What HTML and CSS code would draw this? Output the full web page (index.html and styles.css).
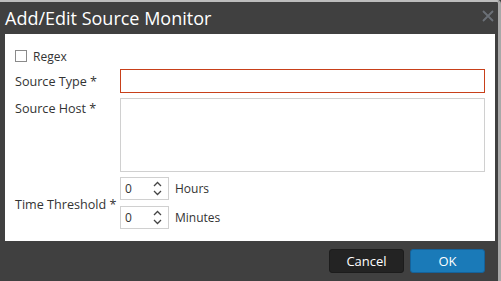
FILE: index.html
```html
<!DOCTYPE html>
<html>
<head>
<meta charset="utf-8">
<link rel="stylesheet" href="styles.css">
</head>
<body>
<div class="window">
  <div class="titlebar">
    <span class="title">Add/Edit Source Monitor</span>
    <svg class="close" width="12" height="12" viewBox="0 0 12 12"><path d="M1 1 L11 11 M11 1 L1 11" stroke="#6b7077" stroke-width="1.8" fill="none"/></svg>
  </div>
  <div class="content">
    <div class="row-check">
      <span class="checkbox"></span>
      <span class="text">Regex</span>
    </div>
    <div class="row row-center">
      <span class="label">Source Type *</span>
      <div class="input error"></div>
    </div>
    <div class="row row-top">
      <span class="label label-top">Source Host *</span>
      <div class="textarea"></div>
    </div>
    <div class="row row-center">
      <span class="label label-time">Time Threshold *</span>
      <div class="times">
        <div class="time">
          <div class="number"><span class="val">0</span>
            <svg class="spin" width="9" height="15" viewBox="0 0 9 15"><path d="M1 5 L4.5 1.5 L8 5 M1 10 L4.5 13.5 L8 10" stroke="#444" stroke-width="1.3" fill="none"/></svg>
          </div>
          <span class="text">Hours</span>
        </div>
        <div class="time">
          <div class="number"><span class="val">0</span>
            <svg class="spin" width="9" height="15" viewBox="0 0 9 15"><path d="M1 5 L4.5 1.5 L8 5 M1 10 L4.5 13.5 L8 10" stroke="#444" stroke-width="1.3" fill="none"/></svg>
          </div>
          <span class="text">Minutes</span>
        </div>
      </div>
    </div>
  </div>
  <div class="footer">
    <button class="btn cancel">Cancel</button>
    <button class="btn ok">OK</button>
  </div>
</div>
</body>
</html>
```
FILE: styles.css
```css
* { box-sizing: border-box; }
html, body { margin: 0; padding: 0; background: #404040; }
body { font-family: "Open Sans", "DejaVu Sans", sans-serif; }
.window {
  width: 501px;
  height: 281px;
  background: #404040;
  border-top: 2px solid #bdbdbd;
  border-right: 3px solid #a8a8a8;
  border-top-right-radius: 4px;
  display: flex;
  flex-direction: column;
}
.titlebar {
  height: 32px;
  display: flex;
  align-items: center;
  justify-content: space-between;
  padding: 0 4px 0 5px;
}
.title {
  color: #ffffff;
  font-size: 18px;
  line-height: 32px;
}
.close { margin-top: -4px; }
.content {
  background: #fff;
  margin: 0 3px 0 5px;
  height: 207px;
  padding: 16px 10px 0 10px;
  display: flex;
  flex-direction: column;
  color: #333;
  font-size: 12px;
}
.row-check {
  display: flex;
  align-items: center;
  height: 12px;
  margin-bottom: 7px;
}
.checkbox {
  width: 12px;
  height: 12px;
  border: 1px solid #8a8a8a;
  margin-right: 6px;
}
.row { display: flex; margin-bottom: 5px; }
.row-center { align-items: center; }
.row-top { align-items: flex-start; }
.label { width: 105px; flex: none; font-size: 12.6px; }
.label-top { line-height: 24px; margin-top: -1px; }
.label-time { padding-top: 3px; }
.input {
  flex: 1;
  height: 24px;
  border: 1px solid #ccc;
}
.input.error { border-color: #c8401a; }
.textarea {
  flex: 1;
  height: 74px;
  border: 1px solid #d0d0d0;
}
.times { display: flex; flex-direction: column; gap: 6px; }
.time { display: flex; align-items: center; }
.number {
  width: 49px;
  height: 23px;
  border: 1px solid #d0d0d0;
  display: flex;
  align-items: center;
  justify-content: space-between;
  padding: 0 6px 0 4px;
  margin-right: 6px;
}
.val { color: #333; }
.footer {
  flex: 1;
  display: flex;
  justify-content: flex-end;
  align-items: flex-start;
  gap: 6px;
  padding: 8px 13px 0 0;
}
.btn {
  width: 75px;
  height: 24px;
  border-radius: 3px;
  color: #fff;
  font-family: "Open Sans", "DejaVu Sans", sans-serif;
  font-size: 13px;
  padding: 0;
  cursor: pointer;
}
.cancel { background: #232323; border: 1px solid #1c1c1c; }
.ok { background: #1a7ab8; border: 1px solid #15629a; }
```
